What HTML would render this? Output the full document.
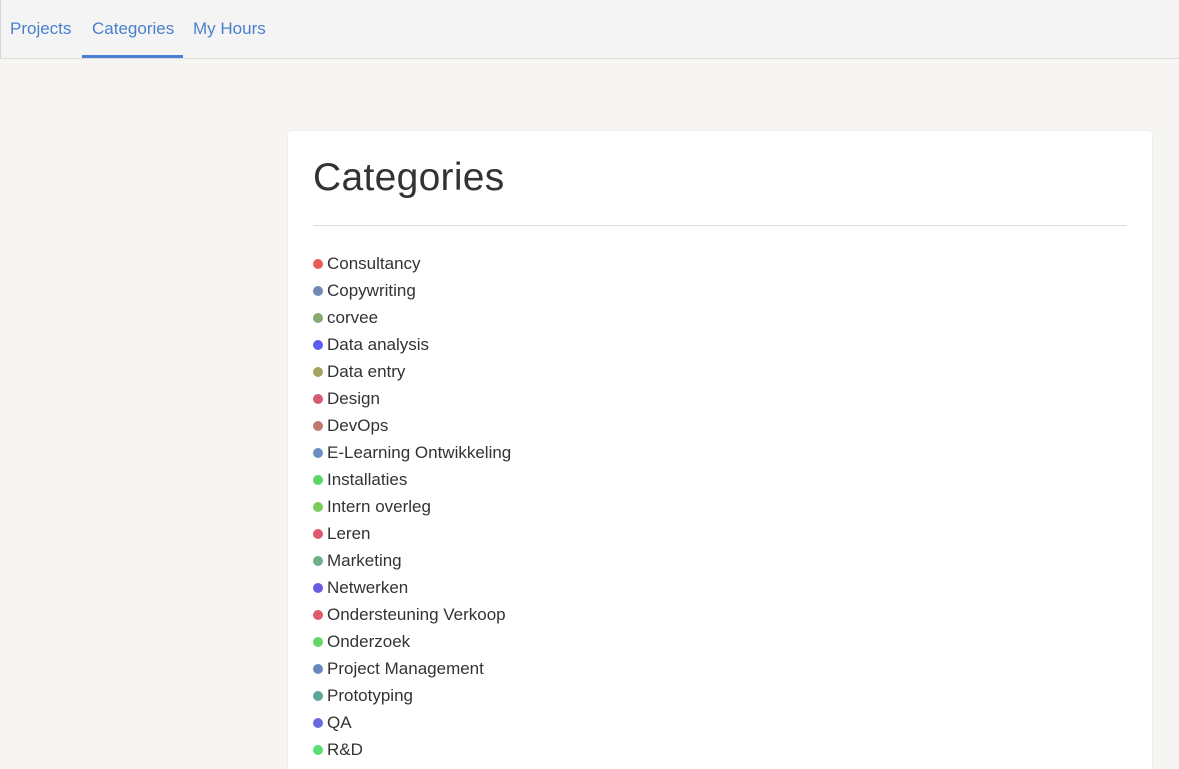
<!DOCTYPE html>
<html><head><meta charset="utf-8"><style>
*{margin:0;padding:0;box-sizing:border-box}
html,body{width:1179px;height:769px;overflow:hidden}
body{background:#f6f5f1;font-family:"Liberation Sans",sans-serif;color:#333;position:relative}
.nav{position:absolute;left:0;top:0;width:1179px;height:59px;background:#f4f4f4;border-bottom:1px solid #dcdcdc;border-left:1px solid #d6d6d6}
.nav a{position:absolute;top:19px;font-size:17px;color:#4a80cc;text-decoration:none}
.ul{position:absolute;left:81px;top:55px;width:101px;height:3px;background:#4a80d4}
.card{position:absolute;left:288px;top:131px;width:864px;height:638px;background:#fff;border-radius:3px 3px 0 0;box-shadow:0 0 2px rgba(0,0,0,.08);overflow:hidden}
h1{position:absolute;left:25px;top:25px;font-size:39px;font-weight:normal;color:#333;letter-spacing:0.3px}
.hr{position:absolute;left:25px;top:94px;width:814px;height:1px;background:#dcdcdc}
ul{position:absolute;left:25px;top:121px;list-style:none}
li{height:27px;line-height:24px;font-size:17px;color:#333;white-space:nowrap}
li i{display:inline-block;width:10px;height:10px;border-radius:50%;margin-right:4px;vertical-align:0px}
</style></head><body>
<div class="nav">
<a style="left:9px">Projects</a>
<a style="left:91px">Categories</a>
<a style="left:192px">My Hours</a>
<div class="ul"></div>
</div>
<div class="card">
<h1>Categories</h1>
<div class="hr"></div>
<ul>
<li><i style="background:#e55c5c"></i>Consultancy</li>
<li><i style="background:#6f8ab5"></i>Copywriting</li>
<li><i style="background:#86aa70"></i>corvee</li>
<li><i style="background:#5a5ef0"></i>Data analysis</li>
<li><i style="background:#a4a362"></i>Data entry</li>
<li><i style="background:#d65a72"></i>Design</li>
<li><i style="background:#c07a6c"></i>DevOps</li>
<li><i style="background:#6a8fc4"></i>E-Learning Ontwikkeling</li>
<li><i style="background:#5bd76a"></i>Installaties</li>
<li><i style="background:#7ccc5c"></i>Intern overleg</li>
<li><i style="background:#dc5870"></i>Leren</li>
<li><i style="background:#6cb08a"></i>Marketing</li>
<li><i style="background:#6a5ae0"></i>Netwerken</li>
<li><i style="background:#e25a6a"></i>Ondersteuning Verkoop</li>
<li><i style="background:#66d466"></i>Onderzoek</li>
<li><i style="background:#6a88c0"></i>Project Management</li>
<li><i style="background:#5aa89a"></i>Prototyping</li>
<li><i style="background:#6a6ae0"></i>QA</li>
<li><i style="background:#5ae070"></i>R&amp;D</li>
</ul>
</div>
</body></html>
